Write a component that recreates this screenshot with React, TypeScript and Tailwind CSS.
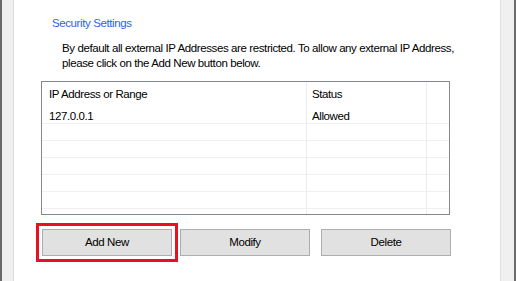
import React from 'react';

type Entry = {
  address: string;
  status: string;
};

const entries: Entry[] = [{ address: '127.0.0.1', status: 'Allowed' }];

const EMPTY_ROWS = 5;

const App: React.FC = () => {
  const rows: (Entry | null)[] = [...entries, ...Array(EMPTY_ROWS).fill(null)];

  return (
    <div
      className="flex w-[516px] h-[281px] overflow-hidden bg-white text-black text-[11.5px] tracking-[-0.4px]"
      style={{ fontFamily: '"Liberation Sans", Arial, sans-serif' }}
    >
      {/* left frame */}
      <div className="w-[14px] shrink-0 border-l-2 border-[#6b6b6b] border-r border-r-[#dcdcdc] bg-[#f0f0f0]" />

      <main className="flex-1 flex flex-col">
        <h2 className="pl-[38px] pt-[15px] leading-[16px] text-[#2a62f0]">Security Settings</h2>

        <p className="pl-[48px] mt-[10px] leading-[15px] whitespace-nowrap">
          By default all external IP Addresses are restricted. To allow any external IP Address,
          <br />
          please click on the Add New button below.
        </p>

        {/* list */}
        <div className="ml-[27px] mt-[10px] w-[409px] h-[134px] border border-[#828790] flex flex-col overflow-hidden">
          <div className="flex h-[25px] shrink-0">
            <div className="w-[265px] border-r border-[#ececec] pl-[7px] pt-[4px] leading-[16px]">IP Address or Range</div>
            <div className="w-[120px] border-r border-[#ececec] pl-[5px] pt-[4px] leading-[16px]">Status</div>
            <div className="flex-1" />
          </div>
          {rows.map((row, i) => (
            <div key={i} className="flex h-[17px] shrink-0 border-b border-[#f0f0f0]">
              <div className="w-[265px] border-r border-[#ececec] pl-[7px] flex items-end leading-[14px]">
                {row?.address}
              </div>
              <div className="w-[120px] border-r border-[#ececec] pl-[5px] flex items-end leading-[14px]">
                {row?.status}
              </div>
              <div className="flex-1" />
            </div>
          ))}
          <div className="flex flex-1">
            <div className="w-[265px] border-r border-[#ececec]" />
            <div className="w-[120px] border-r border-[#ececec]" />
            <div className="flex-1" />
          </div>
        </div>

        {/* buttons */}
        <div className="flex items-center ml-[22px] mt-[8px]">
          <div className="border-[3px] border-[#e81123] p-[3px]">
            <Button label="Add New" />
          </div>
          <div className="ml-[2px]">
            <Button label="Modify" />
          </div>
          <div className="ml-[11px]">
            <Button label="Delete" />
          </div>
        </div>
      </main>

      {/* right frame */}
      <div className="w-[16px] shrink-0 border-l border-[#e0e0e0] border-r-2 border-r-[#6b6b6b] bg-[#f0f0f0]" />
    </div>
  );
};

const Button: React.FC<{ label: string }> = ({ label }) => (
  <button className="w-[130px] h-[27px] bg-[#e1e1e1] border border-[#adadad] text-[11.5px] text-black leading-none tracking-[-0.4px]">
    {label}
  </button>
);

export default App;
